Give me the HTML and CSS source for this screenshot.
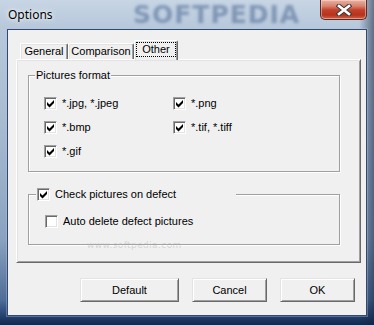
FILE: index.html
```html
<!DOCTYPE html>
<html>
<head>
<meta charset="utf-8">
<link rel="stylesheet" href="styles.css">
</head>
<body>
<div class="window">
  <div class="titlebar">
    <span class="title">Options</span>
    <span class="wm-title">SOFTPEDIA</span>
    <div class="close">
      <svg width="16" height="12" viewBox="0 0 16 12">
        <path d="M3 2 L13 10 M13 2 L3 10" stroke="#3a3a3a" stroke-width="4.6" stroke-linecap="square"/>
        <path d="M3 2 L13 10 M13 2 L3 10" stroke="#ffffff" stroke-width="2.6" stroke-linecap="square"/>
      </svg>
    </div>
  </div>
  <div class="client">
    <div class="tabs">
      <div class="tab t-general">General</div>
      <div class="tab t-comp">Comparison</div>
      <div class="tab t-other active"><span class="focus">Other</span></div>
    </div>
    <div class="panel">
      <fieldset class="group formats">
        <legend class="legend">Pictures format</legend>
        <div class="grid">
          <label class="cb"><span class="box"><svg class="chk" width="7" height="8" viewBox="0 0 7 8"><path d="M0 2 L2.5 4.5 L7 0 L7 3 L2.5 7.5 L0 5 Z" fill="#000"/></svg></span><span class="lbl">*.jpg, *.jpeg</span></label>
          <label class="cb"><span class="box"><svg class="chk" width="7" height="8" viewBox="0 0 7 8"><path d="M0 2 L2.5 4.5 L7 0 L7 3 L2.5 7.5 L0 5 Z" fill="#000"/></svg></span><span class="lbl">*.png</span></label>
          <label class="cb"><span class="box"><svg class="chk" width="7" height="8" viewBox="0 0 7 8"><path d="M0 2 L2.5 4.5 L7 0 L7 3 L2.5 7.5 L0 5 Z" fill="#000"/></svg></span><span class="lbl">*.bmp</span></label>
          <label class="cb"><span class="box"><svg class="chk" width="7" height="8" viewBox="0 0 7 8"><path d="M0 2 L2.5 4.5 L7 0 L7 3 L2.5 7.5 L0 5 Z" fill="#000"/></svg></span><span class="lbl">*.tif, *.tiff</span></label>
          <label class="cb"><span class="box"><svg class="chk" width="7" height="8" viewBox="0 0 7 8"><path d="M0 2 L2.5 4.5 L7 0 L7 3 L2.5 7.5 L0 5 Z" fill="#000"/></svg></span><span class="lbl">*.gif</span></label>
        </div>
      </fieldset>
      <fieldset class="group defect">
        <legend class="legend legend-cb"><label class="cb"><span class="box"><svg class="chk" width="7" height="8" viewBox="0 0 7 8"><path d="M0 2 L2.5 4.5 L7 0 L7 3 L2.5 7.5 L0 5 Z" fill="#000"/></svg></span><span class="lbl">Check pictures on defect</span></label></legend>
        <label class="cb auto"><span class="box"></span><span class="lbl">Auto delete defect pictures</span></label>
      </fieldset>
    </div>
    <div class="buttons">
      <div class="btn btn-default">Default</div>
      <div class="btn">Cancel</div>
      <div class="btn">OK</div>
    </div>
    <span class="wm-url">www.softpedia.com</span>
  </div>
</div>
</body>
</html>
```

FILE: styles.css
```css
html, body {
  margin: 0;
  padding: 0;
  background: #6f87a8;
}

.window {
  position: relative;
  box-sizing: border-box;
  width: 374px;
  height: 325px;
  padding: 0 7px 9px 7px;
  display: flex;
  flex-direction: column;
  background:
    linear-gradient(90deg, rgba(255,255,255,0) 0%, rgba(255,255,255,0) 96%, rgba(20,35,65,0.55) 100%),
    linear-gradient(180deg, #c7d5e4 0px, #b7c8db 28px, #a8bbd1 120px, #8aa2c0 240px, #4e6d98 300px, #2a4776 314px, #1b3560 320px, #132a4f 325px);
  font-family: "Liberation Sans", Arial, sans-serif;
  font-size: 11px;
  color: #000;
  overflow: hidden;
}

.titlebar {
  height: 29px;
  display: flex;
  align-items: flex-start;
  position: relative;
}

.title {
  font-family: "Noto Sans", "Open Sans", sans-serif;
  font-size: 12px;
  line-height: 14px;
  margin-top: 8px;
  margin-left: 1px;
  color: #000;
  text-shadow: 0 0 6px rgba(255,255,255,0.9), 0 0 3px rgba(255,255,255,0.8);
  position: relative;
  z-index: 2;
}

.wm-title {
  position: absolute;
  left: 126px;
  top: 1px;
  font-family: "DejaVu Sans", sans-serif;
  font-weight: bold;
  font-size: 25px;
  line-height: 27px;
  letter-spacing: 1px;
  color: rgba(50, 82, 130, 0.45);
  filter: blur(1.4px);
  z-index: 1;
}

.close {
  margin-left: auto;
  margin-right: 0;
  width: 47px;
  height: 20px;
  box-sizing: border-box;
  border: 1px solid #5a2a24;
  border-top: none;
  border-radius: 0 0 5px 5px;
  background: linear-gradient(180deg, #e8b2a4 0px, #d9836f 6px, #c3402a 10px, #b7321d 15px, #d4704f 20px);
  box-shadow: inset 0 0 0 1px rgba(255,230,220,0.45);
  display: flex;
  align-items: center;
  justify-content: center;
  position: relative;
  z-index: 2;
}

.client {
  position: relative;
  flex: 1;
  display: flex;
  flex-direction: column;
  background: #f0f0f0;
  border: 1px solid #33486b;
  box-shadow: 0 0 0 1px rgba(180,200,225,0.35);
}

.tabs {
  display: flex;
  align-items: flex-end;
  margin: 10px 0 0 12px;
  height: 19px;
}

.tab {
  box-sizing: border-box;
  height: 16px;
  border-top: 1px solid #fff;
  border-left: 1px solid #fff;
  border-right: 1px solid #696969;
  box-shadow: inset -1px 0 0 #a0a0a0, inset 1px 1px 0 #e3e3e3;
  border-radius: 2px 2px 0 0;
  text-align: center;
  line-height: 14px;
  background: #f0f0f0;
}

.t-general { width: 48px; }
.t-comp { width: 66px; }
.t-other { width: 44px; }

.tab.active {
  height: 20px;
  margin-bottom: -1px;
  position: relative;
  z-index: 2;
  padding-top: 1px;
  line-height: 13px;
}

.focus {
  display: block;
  margin: 0 1px 0 1px;
  border: 1px dotted #000;
  height: 13px;
  line-height: 13px;
}

.panel {
  box-sizing: border-box;
  margin-left: 8px;
  width: 345px;
  height: 204px;
  border: 1px solid;
  border-color: #fff #696969 #696969 #fff;
  box-shadow: inset 1px 1px 0 #e3e3e3, inset -1px -1px 0 #a0a0a0;
  padding: 1px 20px 0 11px;
}

.group {
  margin: 0;
  padding: 0;
  min-width: 0;
  border: 1px solid #a0a0a0;
  box-shadow: inset 1px 1px 0 #fff, 1px 1px 0 #fff;
}

.legend {
  margin-left: -9px;
  padding: 0 1px;
  line-height: 13px;
  background: #f0f0f0;
}

.formats {
  margin-top: 8px;
  padding: 15px 0 13px 15px;
}

.grid {
  display: grid;
  grid-template-columns: 129px 1fr;
  row-gap: 11px;
}

.cb {
  display: flex;
  align-items: center;
  height: 13px;
  line-height: 13px;
  white-space: nowrap;
}

.box {
  box-sizing: border-box;
  width: 13px;
  height: 13px;
  flex: none;
  border: 1px solid;
  border-color: #a0a0a0 #fff #fff #a0a0a0;
  box-shadow: inset 1px 1px 0 #696969, inset -1px -1px 0 #e3e3e3;
  background: #fff;
  position: relative;
}

.chk {
  display: block;
  margin: 2px 0 0 2px;
}

.lbl {
  margin-left: 5px;
}

.defect {
  margin-top: 16px;
  padding: 14px 0 16px 16px;
}

.legend-cb {
  margin-left: -9px;
  padding: 0 0 0 1px;
  width: 200px;
  box-sizing: border-box;
}

.buttons {
  display: flex;
  justify-content: flex-end;
  gap: 13px;
  margin: 15px 11px 0 0;
}

.btn {
  box-sizing: border-box;
  width: 75px;
  height: 24px;
  border: 1px solid;
  border-color: #e3e3e3 #696969 #696969 #e3e3e3;
  box-shadow: inset 1px 1px 0 #fff, inset -1px -1px 0 #a0a0a0;
  background: #f0f0f0;
  display: flex;
  align-items: center;
  justify-content: center;
  line-height: 13px;
}

.btn-default { width: 99px; }

.wm-url {
  position: absolute;
  left: 79px;
  top: 210px;
  font-family: "DejaVu Sans", sans-serif;
  font-size: 9px;
  line-height: 10px;
  letter-spacing: 0.4px;
  color: rgba(185, 185, 185, 0.55);
  pointer-events: none;
}
```
